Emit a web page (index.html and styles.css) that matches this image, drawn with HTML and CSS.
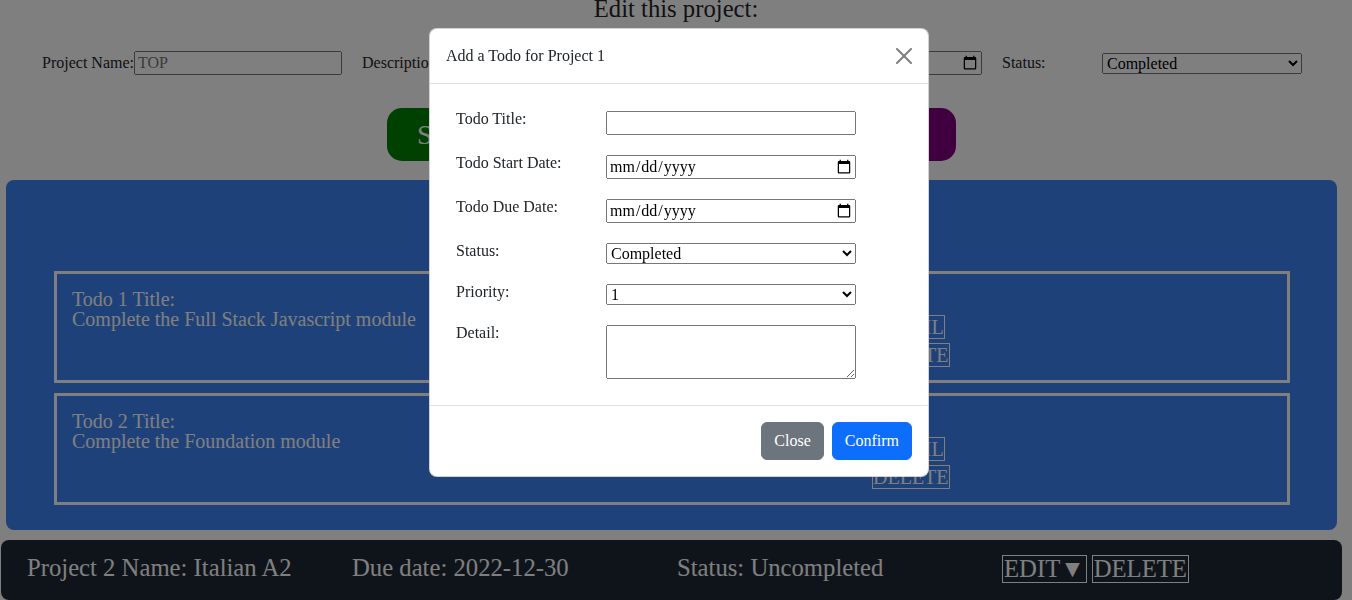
FILE: index.html
```html
<!DOCTYPE html>
<html lang="en">
<head>
<meta charset="utf-8">
<title>Projects</title>
<link rel="stylesheet" href="styles.css">
</head>
<body class="modal-open">
<main class="page">
  <section class="edit">
    <h2 class="edit-title">Edit this project:</h2>
    <form class="edit-form">
      <div class="field"><label class="field-label">Project Name:</label><input class="field-input" type="text" placeholder="TOP"></div>
      <div class="field"><label class="field-label">Description:</label><input class="field-input" type="text" placeholder="The Odin Project"></div>
      <div class="field"><label class="field-label">Due date:</label><input class="field-input" type="date"></div>
      <div class="field"><label class="field-label">Status:</label><select class="field-select"><option>Completed</option><option>Uncompleted</option></select></div>
    </form>
    <div class="edit-actions">
      <button class="big-btn big-btn-save" type="button">Save Changes</button>
      <button class="big-btn big-btn-add" type="button">Add a Todo</button>
    </div>
  </section>

  <section class="project-open">
    <h3 class="project-open-title">Project 1 Todos</h3>
    <div class="todo-list">
      <div class="todo-card">
        <div class="todo-text">Todo 1 Title:<br>Complete the Full Stack Javascript module</div>
        <div class="todo-actions">
          <button class="line-btn" type="button">DETAIL</button>
          <button class="line-btn" type="button">DELETE</button>
        </div>
      </div>
      <div class="todo-card">
        <div class="todo-text">Todo 2 Title:<br>Complete the Foundation module</div>
        <div class="todo-actions">
          <button class="line-btn" type="button">DETAIL</button>
          <button class="line-btn" type="button">DELETE</button>
        </div>
      </div>
    </div>
  </section>

  <section class="project-bar">
    <div class="bar-cell">Project 2 Name: Italian A2</div>
    <div class="bar-cell">Due date: 2022-12-30</div>
    <div class="bar-cell">Status: Uncompleted</div>
    <div class="bar-actions">
      <button class="bar-btn" type="button">EDIT▼</button>
      <button class="bar-btn" type="button">DELETE</button>
    </div>
  </section>
</main>

<div class="backdrop"></div>

<div class="modal" role="dialog">
  <div class="modal-header">
    <h5 class="modal-title">Add a Todo for Project 1</h5>
    <button class="modal-close" type="button" aria-label="Close">
      <svg viewBox="0 0 16 16" width="16" height="16"><path d="M.293.293a1 1 0 0 1 1.414 0L8 6.586 14.293.293a1 1 0 1 1 1.414 1.414L9.414 8l6.293 6.293a1 1 0 0 1-1.414 1.414L8 9.414l-6.293 6.293a1 1 0 0 1-1.414-1.414L6.586 8 .293 1.707a1 1 0 0 1 0-1.414z"/></svg>
    </button>
  </div>
  <div class="modal-body">
    <form class="todo-form">
      <div class="todo-row"><label class="todo-label">Todo Title:</label><input class="todo-control" type="text"></div>
      <div class="todo-row"><label class="todo-label">Todo Start Date:</label><input class="todo-control" type="date"></div>
      <div class="todo-row"><label class="todo-label">Todo Due Date:</label><input class="todo-control" type="date"></div>
      <div class="todo-row"><label class="todo-label">Status:</label><select class="todo-control"><option>Completed</option><option>Uncompleted</option></select></div>
      <div class="todo-row"><label class="todo-label">Priority:</label><select class="todo-control"><option>1</option><option>2</option><option>3</option></select></div>
      <div class="todo-row"><label class="todo-label">Detail:</label><textarea class="todo-control todo-area"></textarea></div>
    </form>
  </div>
  <div class="modal-footer">
    <button class="modal-btn modal-btn-close" type="button">Close</button>
    <button class="modal-btn modal-btn-confirm" type="button">Confirm</button>
  </div>
</div>
</body>
</html>
```

FILE: styles.css
```css
html, body {
  margin: 0;
  padding: 0;
}

body {
  font-family: "Liberation Serif", "Times New Roman", serif;
  font-size: 16px;
  color: #212529;
  background: #fff;
  height: 600px;
  overflow: hidden;
}

/* ---------- edit section ---------- */
.edit-title {
  margin: -5px 0 0;
  font-size: 24.7px;
  font-weight: normal;
  line-height: 27px;
  text-align: center;
}

.edit-form {
  display: grid;
  grid-template-columns: repeat(4, 300px);
  column-gap: 20px;
  padding-left: 42px;
  margin-top: 29px;
}

.field {
  display: flex;
  align-items: center;
  justify-content: space-between;
  height: 24px;
}

.field-label {
  white-space: nowrap;
  color: #212529;
}

.field-input {
  flex: 1;
  min-width: 0;
  font-family: inherit;
  font-size: 16px;
}

.field-select {
  width: 200px;
  font-family: inherit;
  font-size: 16px;
}

.edit-actions {
  display: flex;
  justify-content: center;
  gap: 29px;
  padding-right: 9px;
  margin-top: 33px;
}

.big-btn {
  width: 270px;
  height: 53px;
  border: none;
  border-radius: 15px;
  color: #fff;
  font-family: inherit;
  font-size: 28px;
  line-height: 32px;
  text-align: left;
  padding: 0 30px;
}

.big-btn-save { background: #008000; }
.big-btn-add { background: #800080; }

/* ---------- open project ---------- */
.project-open {
  margin: 19px 15px 0 6px;
  padding: 20px 47px 25px 48px;
  background: #3d83f5;
  border-radius: 8px;
  color: #fff;
}

.project-open-title {
  margin: 0 0 44px;
  font-size: 24px;
  font-weight: normal;
  line-height: 27px;
  text-align: center;
}

.todo-list {
  display: flex;
  flex-direction: column;
  gap: 10px;
}

.todo-card {
  display: grid;
  grid-template-columns: 800px auto;
  box-sizing: border-box;
  height: 112px;
  padding: 15px;
  border: 3px solid #fff;
}

.todo-text {
  font-size: 20px;
  line-height: 20px;
}

.todo-actions {
  display: flex;
  flex-direction: column;
  align-items: flex-start;
  gap: 4px;
  margin-top: 26px;
}

.line-btn {
  background: transparent;
  border: 1px solid #fff;
  color: #fff;
  font-family: inherit;
  font-size: 20px;
  line-height: 22px;
  padding: 0;
}

/* ---------- collapsed project bar ---------- */
.project-bar {
  display: grid;
  grid-template-columns: 325px 325px 325px auto;
  align-items: start;
  box-sizing: border-box;
  height: 60px;
  margin: 10px 10px 0 1px;
  padding: 15px 0 0 26px;
  background: #1f2937;
  border-radius: 8px;
  color: #fff;
  font-size: 24.7px;
}

.bar-cell {
  line-height: 25px;
}

.bar-actions {
  display: flex;
  gap: 5px;
}

.bar-btn {
  background: transparent;
  border: 1px solid #fff;
  color: #fff;
  font-family: inherit;
  font-size: 24.7px;
  line-height: 26px;
  padding: 0 1px;
}

/* ---------- modal ---------- */
.backdrop {
  position: fixed;
  inset: 0;
  background: #000;
  opacity: 0.5;
}

.modal {
  position: fixed;
  top: 28px;
  left: 429px;
  width: 500px;
  box-sizing: border-box;
  background: #fff;
  border: 1px solid rgba(0, 0, 0, 0.175);
  border-radius: 8px;
  color: #212529;
}

.modal-header {
  display: flex;
  align-items: center;
  padding: 16px;
  border-bottom: 1px solid #dee2e6;
}

.modal-title {
  margin: 0;
  font-size: 16px;
  font-weight: normal;
  line-height: 22px;
}

.modal-close {
  margin-left: auto;
  padding: 0;
  width: 16px;
  height: 16px;
  border: none;
  background: transparent;
  opacity: 0.5;
  display: flex;
}

.modal-close svg {
  fill: #000;
}

.modal-body {
  padding: 16px;
}

.todo-form {
  padding: 11px 10px 10px;
}

.todo-row {
  display: flex;
  align-items: flex-start;
  margin-bottom: 20px;
}

.todo-row:last-child {
  margin-bottom: 0;
}

.todo-label {
  width: 150px;
  flex-shrink: 0;
  line-height: 16px;
}

.todo-control {
  width: 250px;
  box-sizing: border-box;
  margin: 0;
  font-family: inherit;
  font-size: 16px;
}

.todo-area {
  height: 54px;
  resize: both;
}

.modal-footer {
  display: flex;
  justify-content: flex-end;
  padding: 12px;
  border-top: 1px solid #dee2e6;
}

.modal-btn {
  margin: 4px;
  padding: 6px 12px;
  border: 1px solid transparent;
  border-radius: 6px;
  color: #fff;
  font-family: inherit;
  font-size: 16px;
  line-height: 24px;
}

.modal-btn-close { background: #6c757d; border-color: #6c757d; }
.modal-btn-confirm { background: #0d6efd; border-color: #0d6efd; }
```
